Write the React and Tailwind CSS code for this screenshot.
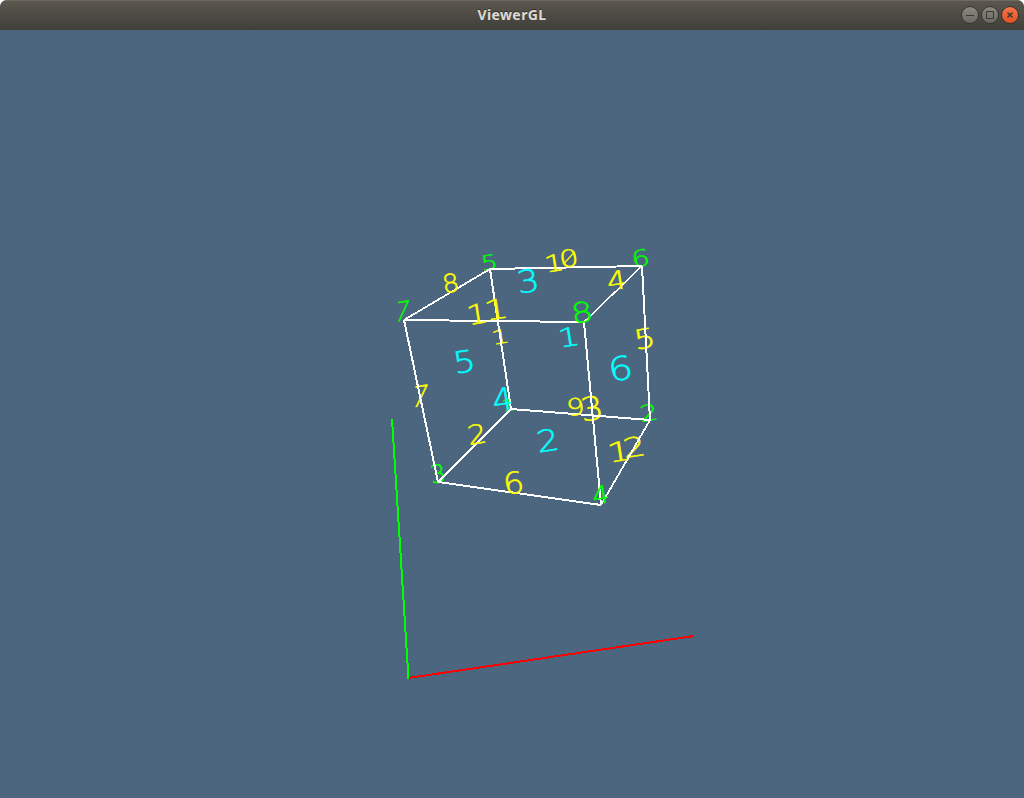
import React from "react";

const GREEN = "#00ff00";
const YELLOW = "#ffff00";
const CYAN = "#00ffff";

// Ink boxes of the labels: [digit, left, top, right, bottom, colour]
const hiddenLabels = [
  ["1", 494, 329, 507, 344, YELLOW],
  ["5", 636.5, 328, 652.5, 348.5, YELLOW],
  ["7", 413, 385.5, 427.5, 406.5, YELLOW],
  ["1", 504, 398, 515, 411, GREEN],
  ["3", 583, 396, 600.5, 420.5, YELLOW],
  ["2", 642, 404, 655.5, 421, GREEN],
  ["3", 432, 464, 444, 483, GREEN],
  ["2", 626, 436.5, 642.5, 457, YELLOW],
  ["6", 633, 249, 648, 266.5, GREEN],
  ["5", 483, 254.5, 495.5, 270, GREEN],
];

const frontLabels = [
  ["7", 396, 301, 409, 321, GREEN],
  ["8", 443.5, 273.5, 457.5, 292.5, YELLOW],
  ["1", 470, 303.5, 485, 324, YELLOW],
  ["1", 488, 298.5, 505, 319.5, YELLOW],
  ["1", 547.5, 254, 561.5, 271.5, YELLOW],
  ["0", 560.5, 249, 577, 267, YELLOW],
  ["3", 519.5, 269, 536.5, 292.5, CYAN],
  ["4", 608, 270.5, 625, 290, YELLOW],
  ["8", 573, 301.5, 591, 322.5, GREEN],
  ["1", 561.5, 327, 577, 346.5, CYAN],
  ["5", 456, 350, 472.5, 372.5, CYAN],
  ["4", 493.5, 387.5, 511.5, 411, CYAN],
  ["2", 470, 424, 484, 444, YELLOW],
  ["6", 505, 471.5, 522, 494, YELLOW],
  ["6", 610.5, 356, 630.5, 380.5, CYAN],
  ["9", 568, 397.5, 583, 415.5, YELLOW],
  ["1", 611, 441, 628, 461.5, YELLOW],
  ["2", 539.5, 429, 556, 451.5, CYAN],
  ["4", 593.5, 485.5, 608, 504, GREEN],
];

const edges = [
  [490, 269, 642, 266, 2],
  [642, 266, 584, 322, 1.5],
  [584, 322, 404, 320, 2],
  [404, 320, 490, 269, 1.8],
  [490, 269, 511, 409, 2],
  [642, 266, 650, 420, 2],
  [404, 320, 438, 482, 2],
  [584, 322, 601, 505, 2],
  [511, 409, 650, 420, 2],
  [511, 409, 438, 482, 1.5],
  [438, 482, 601, 505, 2],
  [601, 505, 650, 420, 1.8],
];

// Natural ink width of each digit at a 100px font size
const INK = { 0: 51, 1: 42, 2: 44, 3: 46, 4: 52, 5: 45, 6: 50, 7: 46, 8: 50, 9: 50 };
const TILT = 9;

function Label({ item }) {
  const [digit, x1, y1, x2, y2, color] = item;
  const w = x2 - x1 - 0.8;
  const h = y2 - y1 - 0.6;
  const t = (TILT * Math.PI) / 180;
  const innerH = (h - w * Math.sin(t)) / Math.cos(t) + w * 0.13;
  const skew = digit === "7" ? -18 : 0;
  const sx = (w * (digit === "7" ? 0.88 : 1)) / INK[digit];
  const sy = innerH / 73;
  const shift = digit === "1" ? -1 : 0;
  return (
    <g transform={`translate(${(x1 + x2) / 2} ${(y1 + y2) / 2}) rotate(${-TILT}) skewX(${skew}) scale(${sx} ${sy})`}>
      <text
        x={shift}
        y="36.5"
        textAnchor="middle"
        fill={color}
        stroke={color}
        strokeWidth={0.55 / ((sx + sy) / 2)}
        strokeLinejoin="round"
        textRendering="geometricPrecision"
        className="[font-family:'DejaVu_Sans',sans-serif] text-[100px] font-extralight"
      >
        {digit}
      </text>
    </g>
  );
}

function Scene() {
  return (
    <svg viewBox="0 30 1024 768" className="block h-[768px] w-full">
      {hiddenLabels.map((item, i) => (
        <Label key={i} item={item} />
      ))}
      <g stroke="#ffffff" shapeRendering="crispEdges">
        {edges.map(([x1, y1, x2, y2, w], i) => (
          <line key={i} x1={x1} y1={y1} x2={x2} y2={y2} strokeWidth={w} />
        ))}
      </g>
      {frontLabels.map((item, i) => (
        <Label key={i} item={item} />
      ))}
      <line x1="563.5" y1="264" x2="574.5" y2="252" stroke={YELLOW} strokeWidth="1.3" />
      <g shapeRendering="crispEdges" strokeWidth="2">
        <line x1="408" y1="678" x2="694" y2="636" stroke="#ff0000" />
        <line x1="392" y1="419" x2="408.5" y2="679" stroke={GREEN} />
      </g>
    </svg>
  );
}

function WindowButton({ close, children }) {
  return (
    <span
      className={
        close
          ? "flex size-[18px] items-center justify-center rounded-full border border-[#35342f] bg-linear-to-b from-[#f5764b] to-[#e4501f]"
          : "flex size-[18px] items-center justify-center rounded-full border border-[#35342f] bg-linear-to-b from-[#8b8880] to-[#6b6962]"
      }
    >
      <svg viewBox="0 0 16 16" className="size-[16px] shrink-0" fill="none" stroke="#3a3833" strokeWidth="1">
        {children}
      </svg>
    </span>
  );
}

export default function App() {
  return (
    <div className="h-[798px] w-full overflow-hidden bg-white">
      <div className="flex h-full flex-col overflow-hidden rounded-t-[7px] bg-[#4d667f]">
        <header className="grid h-[30px] shrink-0 grid-cols-[1fr_auto_1fr] items-center border-t border-[#6c6960] bg-linear-to-b from-[#5b574e] to-[#403f3a] pb-px">
          <span />
          <h1 className="pb-px [font-family:'Noto_Sans',sans-serif] text-[14px] leading-none font-bold tracking-[0.4px] text-[#dfdbd2] [text-shadow:0_-1px_0_#33322e]">
            ViewerGL
          </h1>
          <div className="flex justify-end gap-[2px] pr-[5px]">
            <WindowButton>
              <path d="M4 8.5h8" />
            </WindowButton>
            <WindowButton>
              <path d="M4.5 4.5h7v7h-7z" />
            </WindowButton>
            <WindowButton close>
              <path d="M5.5 5.5l5 5M10.5 5.5l-5 5" strokeWidth="1.5" />
            </WindowButton>
          </div>
        </header>
        <main className="h-[768px] shrink-0">
          <Scene />
        </main>
      </div>
    </div>
  );
}
